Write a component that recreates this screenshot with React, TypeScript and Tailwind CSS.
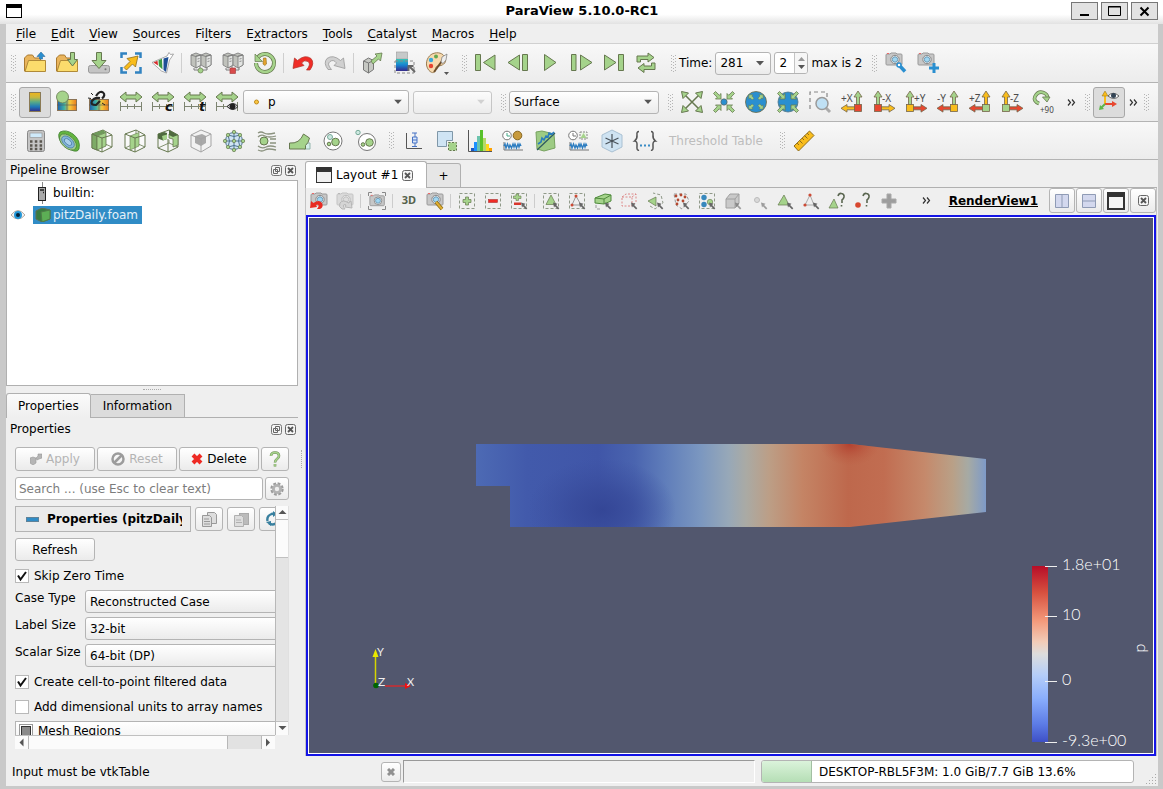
import type { ReactNode } from "react";

const G = "#a5d38b";
const GS = "#66784f";
const Y = "#f9bd1c";
const YS = "#8f6d1c";
const B = "#2a8fd0";
const R = "#e8472f";
const N = "#bdbdbd";
const NS = "#7d7d7d";

const UP = "M17 0l4 6h-2.500v8h-3v-8H13z";

function Axis({ label, left = false, up, side, square }: { label: string; left?: boolean; up: string; side: string; square: string }) {
    return (
        <>
            <g transform={left ? "translate(22 0) scale(-1 1)" : undefined} stroke="#75654a" strokeWidth=".8">
                <path d={UP} fill={up} />
                <path d="M0 17.300l6-3.800v2.300h8v3H6v2.300z" fill={side} />
                <rect x="13.500" y="13.500" width="7" height="7" fill={square} />
            </g>
            <text x={left ? 9 : 0} y="10.500" fontSize="10" fontFamily="Noto Sans, sans-serif" fill="#4c4c4c">{label}</text>
        </>
    );
}

function Cube({ wire = false }: { wire?: boolean }) {
    return (
        <>
            <path d="M1 4L12 0l9 5v12l-10 5-10-4z" fill="#fff" fillOpacity=".6" stroke={GS} />
            <path d="M12 0v13L1 18M12 13l9 4" fill="none" stroke={GS} strokeWidth=".8" />
            {wire ? (
                <path d="M6 6l9-3.500V16l-9 4z" fill={G} stroke={GS} strokeWidth=".6" />
            ) : (
                <>
                    <path d="M1 4l5 2v14l-5-2z" fill="#7dab66" stroke={GS} strokeWidth=".8" />
                    <path d="M6 6l9-3.500V16l-9 4z" fill={G} stroke={GS} strokeWidth=".8" />
                    <path d="M1 4l11-4 3 2.500L6 6z" fill="#6f9a5a" />
                </>
            )}
            <path d="M1 4l10 4 10-3M11 8v14" fill="none" stroke={GS} />
        </>
    );
}

function Servers() {
    return (
        <>
            <path d="M4 16v2h13v-2M10 14v4" fill="none" stroke={NS} />
            {[0, 10].map((x) => (
                <g key={x} transform={`translate(${x} 0)`} stroke="#777" strokeWidth=".8">
                    <path d="M1 3l5-2 5 2v10l-5 3-5-3z" fill="#c0c2bc" />
                    <path d="M6 4l5-1v10l-5 3z" fill="#e2e4e2" />
                    <path d="M1 3l5 1.500L11 3M7.500 7l2-.5M7.500 9.500l2-.5" fill="none" />
                </g>
            ))}
        </>
    );
}

function Heat() {
    return (
        <g>
            <rect x="1.500" y="8.500" width="19" height="11" fill="url(#heat)" stroke="#8b7355" />
            <path d="M1 14h20M11 8v12" stroke="#555" strokeWidth=".6" />
        </g>
    );
}

function Range() {
    return (
        <>
            <path d="M0 6l6-5v3h10V1l6 5-6 5V8H6v3z" fill={G} stroke={GS} />
            <path d="M.5 11v9M7.500 13v5M14.500 13v5M21.500 11v9M0 15.500h22" fill="none" stroke="#7d8471" />
        </>
    );
}

function Camera() {
    return (
        <>
            <path d="M1 3q0-1 1-1h3l1-1h5l1 1h4q1 0 1 1v9q0 1-1 1H2q-1 0-1-1z" fill="#c7c7c7" stroke="#999" />
            <circle cx="10" cy="7.500" r="4.200" fill="#eee" stroke="#888" />
            <circle cx="10" cy="7.500" r="2.700" fill="#9fd6f2" stroke="#6b9ab5" />
            <path d="M2 1.500h2" stroke="#e66" />
        </>
    );
}

function DashBox({ children }: { children?: ReactNode }) {
    return (
        <>
            <rect x="1.500" y="1.500" width="15" height="15" fill="none" stroke="#8f9988" strokeDasharray="3 2" />
            {children}
        </>
    );
}

const pointer = <path d="M11 10.500l4.500 1.200-1.400 1.300 3.200 3.200-1.200 1.200-3.200-3.200-.9 1.400z" fill="#666" />;

function FourArrows({ inward = false }: { inward?: boolean }) {
    return (
        <g fill={G} stroke={GS} strokeWidth=".8">
            {[0, 90, 180, 270].map((a) => (
                <g key={a} transform={`rotate(${a} 11 11)`}>
                    <path d={inward ? "M8 8H2.500l1.700-1.700L.5 2.500l2-2 3.800 3.700L8 2.500z" : "M0 0h6.500L4.700 1.900 8 5.200 5.200 8 1.900 4.700 0 6.500z"} />
                </g>
            ))}
        </g>
    );
}

const icons: Record<string, ReactNode> = {
    Open: (
        <>
            <path d="M.5 19V6l3-3h5l2 3h6v13z" fill="#eab55c" stroke="#a9792f" />
            <path d="M4.500 8.500h17v11H1z" fill="#fbdc6c" stroke="#b08a38" />
            <path d="M17 0l4 4.500h-2.500V7h-3V4.500H13z" fill={B} stroke="#2b6b9b" strokeWidth=".6" />
        </>
    ),
    "Load State": (
        <>
            <path d="M.5 19V6l3-3h5l2 3h6v13z" fill="#eab55c" stroke="#a9792f" />
            <path d="M4.500 8.500h17v11H1z" fill="#fbdc6c" stroke="#b08a38" />
            <path d="M14.500.5h4v7h3l-5 6.500-5-6.500h3z" fill={G} stroke={GS} />
        </>
    ),
    "Save State": (
        <>
            <rect x=".5" y="13.500" width="21" height="7.500" rx="2" fill="#c4c4c4" stroke="#999" />
            <circle cx="17.500" cy="17.300" r="1" fill="#777" />
            <path d="M8.500.5h5v8h4.500l-7 8-7-8h4.500z" fill={G} stroke={GS} />
        </>
    ),
    "Save Extracts": (
        <>
            <path d="M1.500 6V1.500H7M15 1.500h5.500V6M1.500 15v5.500H7M20.500 15v5.500H15" fill="none" stroke="#3183c1" strokeWidth="2.500" />
            <path d="M4 15.500l6-6L7 6.500 18 4l-2.500 11-3-3-6 6z" fill={Y} stroke={YS} strokeWidth=".8" />
        </>
    ),
    "Catalyst Connect": (
        <>
            <path d="M0 10.500L15 4l2-3.500 1.500 2 3-.5-2.500 4-1.500 2-3 13-5-2z" fill="#fff" stroke="#888" strokeWidth=".7" />
            <path d="M1.500 10.500l4-1.700 .5 4.700z" fill="#d52b2b" />
            <path d="M6.500 8.300l3.500-1.500.5 10.700-3.700-3.500z" fill="#3c9a44" />
            <path d="M11.500 6.500l5-1.500-2.500 15-2.500-2z" fill="#1e4f95" />
        </>
    ),
    Connect: (
        <>
            <Servers />
            <circle cx="10.500" cy="18.500" r="2.500" fill={G} stroke={GS} strokeWidth=".7" />
        </>
    ),
    Disconnect: (
        <>
            <Servers />
            <rect x="8" y="16" width="5.500" height="5.500" fill="#d94b4b" stroke="#a44" strokeWidth=".7" />
        </>
    ),
    "Reset Session": (
        <>
            <path d="M3.500 6a9 9 0 1 1-1.500 5" fill="none" stroke={GS} strokeWidth="4" />
            <path d="M3.500 6a9 9 0 1 1-1.500 5" fill="none" stroke={G} strokeWidth="2.600" />
            <path d="M1 2v7.500h7.500z" fill={G} stroke={GS} strokeWidth=".7" />
            <path d="M9.500 6h2.500l.5 6-1.700 1.500L9 12z" fill="#e5a32e" stroke={YS} strokeWidth=".6" />
        </>
    ),
    Undo: <path d="M1 16.500L2.500 6l3 2.500Q13 2 19 6.500q4 4.500-1 11.500h-3.500q5-6 1.500-8.500-3.500-2-6.500 1.500l2.500 2.500z" fill="#f02c26" stroke="#b03028" strokeWidth=".7" />,
    Redo: <path d="M21 16.500L19.500 6l-3 2.500Q9 2 3 6.500 -1 11 4 17.500h3.500Q2.500 12 6 9.500 9.500 7 12.500 11L10 13.500z" fill="#d0d0d0" stroke="#999" strokeWidth=".8" />,
    "Auto Apply": (
        <>
            <path d="M1.500 9l5-3 5 2.500v9l-5 3.500-5-3z" fill="#c6c8c3" stroke="#777" />
            <path d="M1.500 9l5 2 5-2.500M6.500 11v10" fill="none" stroke="#777" />
            <path d="M9 9l6-5-2-2 7-1-1.500 8-2-2-5.500 5z" fill={G} stroke={GS} strokeWidth=".8" />
        </>
    ),
    "Find Data": (
        <>
            <rect x="2.500" y="0" width="11" height="7" fill="#c6c9c9" stroke="#999" strokeWidth=".6" />
            <rect x="2" y="7" width="12" height="12" fill="url(#sky)" />
            <rect x="1" y="9" width="19" height="12" fill="none" stroke="#888" strokeDasharray="3 2" />
            <path d="M21 20l-5-5M14.500 19v-5h5" fill="none" stroke="#666" strokeWidth="2" />
        </>
    ),
    "Edit Color Palette": (
        <>
            <path d="M9 1C3 2 0 8 .5 13c1 6 6 9 8 7s0-5 3-6c5 0 9-3 8-7-1-5-6-7-10.500-6z" fill="#f6d9ae" stroke="#9a7c51" />
            <circle cx="10" cy="4.500" r="2" fill="#63a84f" />
            <circle cx="5" cy="8" r="2.200" fill="#36a9dd" />
            <circle cx="5" cy="14" r="2.200" fill="#e64331" />
            <path d="M8 20l8-11" stroke="#6c4d2b" strokeWidth="2" />
            <path d="M15 10l1-5 5-3-1 6-3 3.500z" fill="#eee" stroke="#777" strokeWidth=".7" />
            <path d="M18 20h5l-2.500 3z" fill="#555" />
        </>
    ),
    "First Frame": <path d="M.5 2.500h5v16h-5zM20 3v15L8.500 10.500z" fill={G} stroke={GS} />,
    "Previous Frame": <path d="M15.500 2.500h5v16h-5zM12.500 3v15L1 10.500z" fill={G} stroke={GS} />,
    Play: <path d="M5.500 2.500v16l11.500-8z" fill={G} stroke={GS} />,
    "Next Frame": <path d="M.5 2.500h4.500v16H.5zM9.500 3v15L21 10.500z" fill={G} stroke={GS} />,
    "Last Frame": <path d="M15.500 2.500h5v16h-5zM1.500 3v15L13 10.500z" fill={G} stroke={GS} />,
    Loop: (
        <path d="M2 10V4h11V1l6 4.500-6 4.500V7.500H5.500V10zM20 11v6.500H9v3L3 16l6-4.500V14h7.500v-3z" fill={G} stroke={GS} />
    ),
    "Adjust Camera": (
        <>
            <Camera />
            <path d="M13.500 12.500l6.500 7" stroke={B} strokeWidth="3.500" />
            <circle cx="14" cy="13" r="2" fill="#fff" stroke={B} strokeWidth="1.500" />
        </>
    ),
    "Add Camera Link": (
        <>
            <Camera />
            <path d="M15.500 11h3v3.500H22v3h-3.500V21h-3v-3.500H12v-3h3.500z" fill={B} />
        </>
    ),
    "Scalar Bar": <rect x="5.500" y="1.500" width="11" height="19" fill="url(#bar)" stroke="#8a7a55" />,
    "Edit Color Map": (
        <>
            <Heat />
            <circle cx="6.500" cy="6" r="6" fill={G} stroke={GS} strokeWidth=".8" />
        </>
    ),
    "Separate Color Map": (
        <>
            <Heat />
            <path d="M8 5q4-6 7-3.500t-1 6M12 7q-6-1-8 3t4 4l4-4" fill="none" stroke="#222" strokeWidth="2.200" />
            <path d="M0 7l3 .5M3 2l2 2M14 12l3 2" stroke="#222" />
        </>
    ),
    "Rescale to Data": <Range />,
    "Rescale to Custom": (
        <>
            <Range />
            <text x="13" y="20" fontSize="13" fontWeight="bold" fontStyle="italic" fontFamily="DejaVu Sans, sans-serif" fill="#111">c</text>
        </>
    ),
    "Rescale over Time": (
        <>
            <Range />
            <text x="15" y="20" fontSize="13" fontWeight="bold" fontStyle="italic" fontFamily="DejaVu Sans, sans-serif" fill="#111">t</text>
        </>
    ),
    "Rescale to Visible": (
        <>
            <Range />
            <path d="M11 15.500q6-6 11 0-5 6-11 0z" fill="#ddd" stroke="#222" />
            <circle cx="16.500" cy="15.500" r="3" fill="#222" />
        </>
    ),
    "Reset Camera": (
        <>
            <path d="M4 4l14 14M18 4L4 18" stroke={GS} strokeWidth="1.500" />
            <path d="M.5.5l7 1.500L2 7.500zM21.500.5l-1.500 7L14.500 2zM.5 21.500l1.500-7L7.500 20zM21.500 21.500l-7-1.500 5.500-5.500z" fill={G} stroke={GS} />
        </>
    ),
    "Zoom to Data": (
        <>
            <FourArrows inward />
            <circle cx="11" cy="11" r="3.200" fill={B} stroke="#6a5a3a" strokeWidth=".6" />
        </>
    ),
    "Reset Camera Closest": (
        <>
            <circle cx="11" cy="11" r="10.500" fill={B} stroke="#6b6a45" strokeWidth=".8" />
            <g transform="translate(3.800 3.800) scale(.65)"><FourArrows /></g>
        </>
    ),
    "Zoom Closest": (
        <>
            <circle cx="11" cy="11" r="10" fill={B} stroke="#4a7187" strokeWidth=".8" />
            <FourArrows inward />
        </>
    ),
    "Zoom to Box": (
        <>
            <path d="M1 18V1h17v6" fill="none" stroke="#888" strokeWidth="1.200" strokeDasharray="4 3" />
            <path d="M17 17l4 4" stroke="#aaa" strokeWidth="3" />
            <circle cx="13" cy="12.500" r="6" fill="#bfe0f4" stroke="#9a9a9a" strokeWidth="1.500" />
        </>
    ),
    "+X": <Axis label="+X" up={G} side={Y} square={R} />,
    "-X": <Axis label="-X" left up={G} side={Y} square={R} />,
    "+Y": <Axis label="+Y" left up={G} side={R} square={Y} />,
    "-Y": <Axis label="-Y" up={G} side={R} square={Y} />,
    "+Z": <Axis label="+Z" up={Y} side={R} square={G} />,
    "-Z": <Axis label="-Z" left up={Y} side={R} square={G} />,
    "Rotate 90": (
        <>
            <path d="M6 12.500Q0 10 2 5.500 5 0 10 1.500q4.500 1.500 4.500 5" fill="none" stroke={GS} strokeWidth="3.600" />
            <path d="M6 12.500Q0 10 2 5.500 5 0 10 1.500q4.500 1.500 4.500 5" fill="none" stroke={G} strokeWidth="2.200" />
            <path d="M9.500 6h7.500l-3 5z" fill={G} stroke={GS} strokeWidth=".8" />
            <text x="7" y="21.500" fontSize="8" fontFamily="Noto Sans, sans-serif" fill="#444">+90</text>
        </>
    ),
    "Orientation Axes": (
        <>
            <path d="M7 14V3" stroke={Y} strokeWidth="2" /><path d="M4 5l3-5 3 5z" fill={Y} stroke={YS} strokeWidth=".5" />
            <path d="M7 13h8" stroke={R} strokeWidth="2" /><path d="M14 10l5 3-5 3z" fill={R} />
            <path d="M7 13l-4 4" stroke="#5db54c" strokeWidth="2" /><path d="M1 19l1-5 4 4z" fill="#5db54c" />
            <path d="M10 5q5-5.500 11 0-5 5-11 0z" fill="#fff" stroke="#444" strokeWidth=".8" />
            <circle cx="15.500" cy="4.500" r="2.500" fill="#345" />
        </>
    ),
    Calculator: (
        <>
            <rect x="2.500" y=".5" width="17" height="21" rx="2" fill="#c5c5c5" stroke="#888" />
            <rect x="5" y="3" width="12" height="4.500" fill="#cfeafa" stroke="#999" strokeWidth=".7" />
            <path d="M5 11.500h13M5 15.500h13M5 19h13" stroke="#59564f" strokeWidth="2.400" strokeDasharray="2.500 2.300" />
        </>
    ),
    Contour: (
        <>
            <path d="M2 2Q8-1 15 4q8 6 6 15-1 3-5 2Q4 18 1 8 0 4 2 2z" fill="#63b53f" stroke="#3f7d30" strokeWidth=".8" />
            <g transform="rotate(42 10 12)">
                <ellipse cx="10" cy="12" rx="10" ry="6" fill="#a9d18f" stroke="#4b7a3a" strokeWidth=".7" />
                <ellipse cx="10" cy="12" rx="7.500" ry="4.500" fill="#86b6dc" stroke="#4c7fa5" strokeWidth=".8" />
                <ellipse cx="10" cy="12" rx="4.500" ry="2.500" fill="#a9cfea" stroke="#4c7fa5" strokeWidth=".8" />
            </g>
        </>
    ),
    Clip: <Cube />,
    Slice: <Cube wire />,
    Threshold: (
        <>
            <path d="M1 4L12 0l9 5v12l-10 5-10-4z" fill="#f5f5f5" stroke={GS} />
            <path d="M12 13L1 18M12 13l9 4M12 13v-3" stroke={GS} strokeWidth=".8" />
            <path d="M1 4l6-2 3 1v6l-4 1.500-5-2z" fill="#4f6b3f" />
            <path d="M5 6l5-1.500V9l-4 1.500z" fill={G} />
            <path d="M12 4l9 1v10l-5 2V9l-4-1z" fill={G} stroke={GS} strokeWidth=".8" />
            <path d="M12 0l9 5-5 2-4-2z" fill="#4f6b3f" />
            <path d="M11 9v13" stroke={GS} />
        </>
    ),
    "Extract Subset": (
        <>
            <path d="M1 5l10-5 10 4v12l-10 6-10-5z" fill="#f2f2f2" stroke="#a4a4a4" />
            <path d="M5 6l7-2 4 2v7l-5 3-6-3z" fill="#a9a9a9" />
            <path d="M1 5l10 4 10-5M11 9v13" fill="none" stroke="#a4a4a4" />
        </>
    ),
    Glyph: (
        <>
            <circle cx="11" cy="11" r="8.500" fill="#cfe4f4" stroke="#4d7390" />
            <path d="M11 1v20M1 11h20M5 5q6 3 12 0M5 17q6-3 12 0M5 5q3 6 0 12M17 5q-3 6 0 12" fill="none" stroke="#4d7390" />
            <g fill={G} stroke={GS} strokeWidth=".7">
                {[[11, 2], [2, 11], [20, 11], [11, 20], [5, 5], [17, 5], [5, 17], [17, 17], [11, 11]].map(([x, y]) => (
                    <circle key={`${x}-${y}`} cx={x} cy={y} r="1.700" />
                ))}
            </g>
        </>
    ),
    "Stream Tracer": (
        <>
            <path d="M2 3q3-2 6 0t11 0M2 7q3-3 7-1t11 0M2 16q4 3 8 1t10 0M2 20q4 2 7 0t11 0M14 9h6M14 13h6" fill="none" stroke="#8b927f" strokeWidth="1.300" />
            <circle cx="8" cy="11" r="4" fill={G} stroke={GS} />
        </>
    ),
    "Warp By Vector": (
        <>
            <path d="M15 13h6v6h-6z" fill="#d5efea" stroke="#93b5ad" />
            <path d="M.5 19v-6q10 1 14-9l6 4q-1 5-4 7.500V19z" fill={G} stroke={GS} />
        </>
    ),
    "Group Datasets": (
        <>
            <circle cx="11" cy="11" r="9" fill="#fff" stroke="#777" />
            <circle cx="8" cy="7" r="2.500" fill="#cde8e0" stroke="#7a9" />
            <circle cx="13.500" cy="12" r="3.800" fill={G} stroke={GS} />
            <circle cx="7" cy="14" r="1.800" fill={G} stroke={GS} />
        </>
    ),
    "Extract Group": (
        <>
            <circle cx="12" cy="12" r="8.500" fill="#fff" stroke="#777" />
            <circle cx="3" cy="2.500" r="2.200" fill="#cde8e0" stroke="#7a9" />
            <circle cx="14.500" cy="12.500" r="3.800" fill={G} stroke={GS} />
            <circle cx="8" cy="14.500" r="1.800" fill={G} stroke={GS} />
        </>
    ),
    "Box Chart": (
        <>
            <path d="M3.500 3v15.500H19" fill="none" stroke="#555" />
            <path d="M12 3v14M9 3h5M9 16.500h5" stroke="#4773c4" />
            <path d="M9.500 7h4.500v6H9.500zM9 10h5" fill="#dce8fa" stroke="#4773c4" />
        </>
    ),
    "Extract Selection": (
        <>
            <path d="M1.500 1.500h15v9h-6v6h-9z" fill="#cfe4f4" stroke="#7f97a8" />
            <rect x="12.500" y="12.500" width="8" height="8" fill={G} stroke={GS} strokeDasharray="2 1.500" />
        </>
    ),
    Histogram: (
        <>
            <path d="M2 18h3v3H2z" fill="#1c57c0" /><path d="M5 12h3v9H5z" fill="#1c90ff" />
            <path d="M8 6h3v15H8z" fill="#6cc4ae" /><path d="M11 0h3v21h-3z" fill="#58c12a" />
            <path d="M14 8h3v13h-3z" fill="#b5d96a" /><path d="M17 14h3v7h-3z" fill="#ffd91a" />
            <path d="M20 18h3v3h-3z" fill="#ffa200" />
            <path d="M-.5 0v21.500h23.500" fill="none" stroke="#555" />
        </>
    ),
    "Plot Global Variables": (
        <>
            <circle cx="5" cy="5.500" r="4.300" fill="#fff" stroke="#777" />
            <path d="M5 3v3h3" fill="none" stroke="#4a8" />
            <circle cx="15.500" cy="5.500" r="4.300" fill="#c79a3d" stroke="#86661f" />
            <path d="M2 12v8h19" fill="none" stroke="#777" />
            <path d="M2 16l1-2 1 4 1.500-4 1.500 4 1-3 1.500 3 1.500-4 1 3 1-3 1.500 4 1.500-4 1 3 1-3 1 2" fill="none" stroke="#2d7dc0" strokeWidth="1.400" />
        </>
    ),
    "Plot Over Line": (
        <>
            <path d="M1 2l6-1 12 3 1 14-11 3L2 19z" fill="#9dcb84" stroke="#77a25f" />
            <path d="M2 20L20 3" stroke="#2e5960" strokeWidth="1.200" />
            <path d="M3 14l3-2 1-4 2 2 2-4 2 1 1-4 3 1 2-2" fill="none" stroke="#2a7dbd" strokeWidth="1.600" />
        </>
    ),
    "Plot Selection Over Time": (
        <>
            <circle cx="5" cy="5.500" r="4.300" fill="#fff" stroke="#777" />
            <path d="M5 3v3h3" fill="none" stroke="#777" />
            <rect x="12" y="2" width="7" height="7" fill="#edf4e8" stroke="#888" strokeDasharray="2 1" />
            <path d="M15.500 3l3 5h-6z" fill={G} />
            <path d="M2 12v8h19" fill="none" stroke="#777" />
            <path d="M2 16l1-2 1 4 1.500-4 1.500 4 1-3 1.500 3 1.500-4 1 3 1-3 1.500 4 1.500-4 1 3 1-3 1 2" fill="none" stroke="#2d7dc0" strokeWidth="1.400" />
        </>
    ),
    "Probe Location": (
        <>
            <path d="M1 5l10-5 10 5v12l-10 5-10-5z" fill="#cfe3f2" stroke="#a9c0d2" />
            <path d="M11 4v14M4.500 8l13 6M17.500 8l-13 6" stroke="#49525a" strokeWidth="1.200" />
        </>
    ),
    "Programmable Filter": (
        <>
            <path d="M5 1.500Q2.500 1.500 3 5t-2.500 6Q3.500 11 3 16t2 4M17 1.500q2.500 0 2 3.500t2.500 6q-3 0-2.500 5t-2 4" fill="none" stroke="#555" strokeWidth="1.500" />
            <path d="M6 15.500h11" stroke="#3a8cc5" strokeWidth="2" strokeDasharray="2 2" />
        </>
    ),
    Ruler: (
        <>
            <path d="M1 16L16.500 1l4.500 4.500L5.500 21z" fill={Y} stroke={YS} />
            <path d="M4 13l2 2M6.500 10.500l3 3M9 8l2 2M11.500 5.500l3 3M14 3l2 2" stroke={YS} />
        </>
    ),
};

const viewIcons: Record<string, ReactNode> = {
    "Camera Undo": <><Camera /><path d="M0 16l1-7 2.500 2Q9 7 12 11q2 4-2 6H7q3-4 .5-4.500L6 13l1 2z" fill="#e82b22" /></>,
    "Camera Redo": <g opacity=".5"><g className="grayscale"><Camera /></g><path d="M16 16l-1-7-2.500 2Q7 7 4 11q-2 4 2 6h3q-3-4-.5-4.500L10 13l-1 2z" fill={N} stroke={NS} /></g>,
    "Capture Screenshot": (
        <>
            <g transform="translate(1 2) scale(.9)"><Camera /></g>
            <path d="M.5 4V.5H4M14 .5h3.500V4M.5 14v3.500H4M17.500 14v3.500H14" fill="none" stroke="#888" />
        </>
    ),
    "Adjust View Camera": <><Camera /><path d="M10 10l6 7" stroke="#8a6a18" strokeWidth="3.500" /><path d="M10 10l6 7" stroke="#e0ae2f" strokeWidth="2" /></>,
    "Add Selection": <DashBox><path d="M7.500 5h3v2.500H13v3h-2.500V13h-3v-2.500H5v-3h2.500z" fill={G} stroke={GS} strokeWidth=".7" /></DashBox>,
    "Subtract Selection": <DashBox><rect x="4.500" y="7.500" width="9" height="3" fill="#f02c26" stroke="#a33" strokeWidth=".6" /></DashBox>,
    "Toggle Selection": <DashBox><path d="M6 2h2.500v2H11v2.500H8.500v2H6v-2H3.500V4H6z" fill={G} stroke={GS} strokeWidth=".6" /><path d="M4 10.500h7v2.500H4z" fill="#d8362c" />{pointer}</DashBox>,
    "Select Cells": <DashBox><path d="M9 3l5 9.500H4z" fill={G} stroke={GS} strokeWidth=".7" />{pointer}</DashBox>,
    "Select Points": <DashBox><path d="M8 4l-4 9h9z" fill="none" stroke="#999" /><circle cx="8" cy="4" r="1.500" fill="#cc4b35" /><circle cx="4" cy="13" r="1.500" fill="#cc4b35" />{pointer}</DashBox>,
    "Frustum Cells": <><path d="M1 6l10-4 6 1v6l-7 3-9-1z" fill={G} stroke="#4f8a3c" /><path d="M1 6l9 1 7-4M10 7v5" fill="none" stroke="#4f8a3c" /><path d="M2 13v4h6" fill="none" stroke="#999" strokeDasharray="3 2" />{pointer}</>,
    "Frustum Points": <><path d="M2 5h10v9H2zM2 5l4-3h10v8l-4 4M12 5l4-3" fill="none" stroke="#d88" strokeDasharray="2 1.500" />{pointer}</>,
    "Polygon Cells": <><path d="M2 9l8-4v9z" fill={G} stroke={GS} strokeWidth=".7" /><path d="M4 14l5 3 8-6-2-8-8-2" fill="none" stroke="#8f9988" strokeDasharray="3 2" />{pointer}</>,
    "Polygon Points": <><path d="M2 2h12l3 7-7 8-6-4z" fill="none" stroke="#999" strokeDasharray="3 2" />{[[4, 4], [9, 3], [13, 5], [6, 8], [11, 9], [5, 12]].map(([x, y]) => <circle key={`${x}-${y}`} cx={x} cy={y} r="1.400" fill="#b5482f" />)}{pointer}</>,
    "Select Blocks": <DashBox><circle cx="6" cy="5.500" r="2.700" fill="#3788bd" /><circle cx="6" cy="12.500" r="2.700" fill="#3788bd" /><circle cx="12" cy="10" r="2.700" fill={G} stroke={GS} strokeWidth=".6" />{pointer}</DashBox>,
    "Frustum Blocks": <><path d="M2 7l4-5h9v9l-4 5H2z" fill="#c9c9c9" stroke="#a0a0a0" /><path d="M2 7h9l4-5M11 7v9" fill="none" stroke="#a0a0a0" /><g opacity=".6">{pointer}</g></>,
    "Hover Points": <g opacity=".6"><circle cx="7" cy="8" r="2.500" fill="#ccc" stroke="#999" />{pointer}</g>,
    "Interactive Cells": <><path d="M8 3l5 10H2z" fill={G} stroke={GS} strokeWidth=".7" />{pointer}</>,
    "Interactive Points": <><path d="M8 3l-5 10h9z" fill="none" stroke="#aaa" /><circle cx="8" cy="3" r="1.600" fill="#cc4b35" /><circle cx="3" cy="13" r="1.600" fill="#cc4b35" />{pointer}</>,
    "Hover Cells Query": <><path d="M6 7l4 9H1z" fill={G} stroke={GS} strokeWidth=".7" /><path d="M10 4q1-3 3.500-2.500 3 .5 2.500 3.500-.5 2-2 3v3M13.500 13v1.500" fill="none" stroke="#5a6650" strokeWidth="1.600" /></>,
    "Hover Points Query": <><circle cx="4" cy="13" r="2.800" fill="#d8472f" /><path d="M9 4q1-3 3.500-2.500 3 .5 2.500 3.500-.5 2-2 3v3M12.500 13v1.500" fill="none" stroke="#5a6650" strokeWidth="1.600" /></>,
    "Grow Selection": <path d="M7 2h4v5h5v4h-5v5H7v-5H2V7h5z" fill="#9d9d9d" stroke="#a9a9a9" />,
};

const fileTools = ["Open", "Load State", "Save State", "Save Extracts", "Catalyst Connect", "|", "Connect", "Disconnect", "Reset Session", "|", "Undo", "Redo", "|", "Auto Apply", "Find Data", "Edit Color Palette"];
const vcrTools = ["First Frame", "Previous Frame", "Play", "Next Frame", "Last Frame", "Loop"];
const colorTools = ["Edit Color Map", "Separate Color Map", "Rescale to Data", "Rescale to Custom", "Rescale over Time", "Rescale to Visible"];
const cameraTools = ["Reset Camera", "Zoom to Data", "Reset Camera Closest", "Zoom Closest", "Zoom to Box", "+X", "-X", "+Y", "-Y", "+Z", "-Z", "Rotate 90"];
const filterTools = ["Calculator", "Contour", "Clip", "Slice", "Threshold", "Extract Subset", "Glyph", "Stream Tracer", "Warp By Vector", "Group Datasets", "Extract Group"];
const dataTools = ["Box Chart", "Extract Selection", "Histogram", "Plot Global Variables", "Plot Over Line", "Plot Selection Over Time", "Probe Location", "Programmable Filter"];
const viewTools = [
    "Camera Undo", "Camera Redo", "|", "Capture Screenshot", "|", "3D", "Adjust View Camera", "|", "Add Selection", "Subtract Selection", "Toggle Selection", "|",
    "Select Cells", "Select Points", "Frustum Cells", "Frustum Points", "Polygon Cells", "Polygon Points", "Select Blocks", "Frustum Blocks", "Hover Points",
    "Interactive Cells", "Interactive Points", "Hover Cells Query", "Hover Points Query", "Grow Selection",
];

const menus = [
    ["", "F", "ile"], ["", "E", "dit"], ["", "V", "iew"], ["", "S", "ources"], ["Fi", "l", "ters"], ["E", "x", "tractors"],
    ["", "T", "ools"], ["", "C", "atalyst"], ["", "M", "acros"], ["", "H", "elp"],
];

const raised = "rounded-[3px] border border-[#b4b4b4] bg-linear-to-b from-white to-[#ebebeb]";

function Grip() {
    return (
        <svg className="mx-[3px] shrink-0" width="5" height="17" aria-hidden="true">
            <path d="M.5 0v17M2.500 1v16M4.500 0v17" stroke="#b5b5b5" strokeDasharray="1 2" />
        </svg>
    );
}

function Chevrons() {
    return (
        <svg width="9" height="7" aria-hidden="true">
            <path d="M1 .5l2.500 3L1 6.500M5 .5l2.500 3L5 6.500" fill="none" stroke="#333" strokeWidth="1.200" />
        </svg>
    );
}

function Tools({ names, wide = false }: { names: string[]; wide?: boolean }) {
    return (
        <>
            {names.map((name, i) =>
                name === "|" ? (
                    <div key={i} className="mx-0.5 h-5 w-0.5 shrink-0 border-l border-[#cfcfcf]" />
                ) : (
                    <button key={name} aria-label={name} className={wide ? "flex h-8 w-[33px] shrink-0 items-center justify-center" : "flex h-8 w-8 shrink-0 items-center justify-center"}>
                        <svg width="22" height="22" viewBox="0 0 22 22" className="overflow-visible">{icons[name]}</svg>
                    </button>
                )
            )}
        </>
    );
}

function Toolbar({ children }: { children: ReactNode }) {
    return (
        <div className="flex h-[39px] shrink-0 items-center overflow-hidden border-b border-[#b3b3b3] bg-linear-to-b from-[#f8f8f8] to-[#ececec] pl-0.5 last:h-[38px]">
            {children}
        </div>
    );
}

function Select({ label, options, className, disabled = false, dot = false }: { label: string; options: string[]; className: string; disabled?: boolean; dot?: boolean }) {
    return (
        <div className={`relative shrink-0 ${className}`}>
            <select aria-label={label} disabled={disabled} className={`h-full w-full appearance-none pr-5 ${dot ? "pl-6" : "pl-1"} ${raised}`}>
                {options.map((o) => <option key={o}>{o}</option>)}
            </select>
            {dot && <span className="absolute top-1/2 left-[11px] size-[5px] -translate-y-1/2 rounded-full border border-[#c08a1c] bg-[#fbc843]" />}
            <svg className="pointer-events-none absolute top-1/2 right-[7px] -translate-y-1/2" width="8" height="5" aria-hidden="true">
                <path d="M0 0h8L4 4.500z" fill={disabled ? "#c4c4c4" : "#555"} />
            </svg>
        </div>
    );
}

function CloseBox() {
    return (
        <svg width="11" height="11" viewBox="0 0 11 11">
            <rect x=".5" y=".5" width="10" height="10" rx="2" fill="#f4f4f4" stroke="#666" />
            <path d="M3 3l5 5M8 3L3 8" stroke="#555" strokeWidth="1.800" />
        </svg>
    );
}

function DockHeader({ title }: { title: string }) {
    return (
        <div className="flex items-center gap-[3px] pr-0.5 pl-1">
            <h2 className="flex-1">{title}</h2>
            <button aria-label={`Float ${title}`}>
                <svg width="11" height="11" viewBox="0 0 11 11">
                    <rect x=".5" y=".5" width="10" height="10" rx="2" fill="#f4f4f4" stroke="#777" />
                    <path d="M4.500 2.500h4v4h-4zM2.500 4.500h4v4h-4z" fill="#f4f4f4" stroke="#666" />
                </svg>
            </button>
            <button aria-label={`Close ${title}`}><CloseBox /></button>
        </div>
    );
}

function Check({ label, checked = false }: { label: string; checked?: boolean }) {
    return (
        <label className="flex h-[21px] shrink-0 items-center gap-[5px]">
            <span className="relative size-3.5">
                <input type="checkbox" defaultChecked={checked} className="peer block size-3.5 appearance-none border border-[#b9b9b9] bg-white" />
                <svg className="pointer-events-none absolute inset-0 hidden peer-checked:block" width="14" height="14" aria-hidden="true">
                    <path d="M3 6.500l2.500 4L11 3" fill="none" stroke="#111" strokeWidth="2" />
                </svg>
            </span>
            {label}
        </label>
    );
}

function Field({ label, value }: { label: string; value: string }) {
    return (
        <label className="flex h-[23px] w-[300px] shrink-0">
            <span className="w-[70px] shrink-0">{label}</span>
            <select className={`h-full flex-1 appearance-none pl-1 ${raised}`}>
                <option>{value}</option>
            </select>
        </label>
    );
}

function PipelineBrowser() {
    return (
        <section>
            <div className="h-5 pt-0.5"><DockHeader title="Pipeline Browser" /></div>
            <ul className="h-[206px] border border-[#b0b0b0] bg-white pt-px">
                <li className="flex h-[22px] items-center pl-[29px]">
                    <svg width="12" height="22" viewBox="0 0 12 22" aria-hidden="true">
                        <path d="M6.500 0v5M6.500 19v3" stroke="#888" />
                        <rect x="2.500" y="5.500" width="7" height="13" fill="#aaa" stroke="#222" />
                        <path d="M4 8h4M7 10.500h1" stroke="#222" strokeWidth="1.500" />
                    </svg>
                    <span className="ml-[5px]">builtin:</span>
                </li>
                <li className="flex h-[22px] items-center pl-1">
                    <svg width="14" height="12" viewBox="0 0 14 12" aria-hidden="true">
                        <path d="M0 6q7-9 14 0-7 8-14 0z" fill="#f4f4f4" stroke="#b5a9a0" />
                        <circle cx="7" cy="6" r="4" fill="#2496d6" />
                        <circle cx="7" cy="6" r="2" fill="#052238" />
                    </svg>
                    <span className="ml-2 flex h-[18px] items-center bg-[#308cc6] pr-1 text-[#e6f1f8]">
                        <svg className="mx-0.5" width="16" height="14" viewBox="0 0 16 14" aria-hidden="true">
                            <path d="M1 3l6-3 8 2v9l-8 3-6-3z" fill="#3a7c3f" stroke="#5d6f52" />
                            <path d="M6 4l9-2v9l-8 3z" fill="#5cae55" stroke="#4e7d47" />
                        </svg>
                        pitzDaily.foam
                    </span>
                </li>
            </ul>
        </section>
    );
}

function PropertiesDock() {
    return (
        <section className="flex min-h-0 flex-1 flex-col">
            <div className="flex h-[25px] items-end" role="tablist">
                <button role="tab" aria-selected="true" className="h-[25px] rounded-t-[3px] border border-b-0 border-[#b0b0b0] bg-linear-to-b from-[#fbfbfb] to-[#efefef] px-[11px]">Properties</button>
                <button role="tab" aria-selected="false" className="h-6 border border-l-0 border-[#b0b0b0] bg-[#dcdcdc] px-3">Information</button>
                <div className="flex-1 self-stretch border-b border-[#b0b0b0]" />
            </div>
            <div className="h-[29px] pt-[3px]"><DockHeader title="Properties" /></div>
            <div className="flex min-h-0 flex-1 flex-col px-[9px] pb-2">
                <div className="flex h-6 gap-0.5">
                    <button disabled className={`flex flex-1 items-center justify-center gap-1 text-[#b4b4b4] ${raised}`}>
                        <svg width="12" height="12" viewBox="0 0 12 12"><path d="M0 5l3-1 3 1v5l-3 2-3-2zM6 5l2-2V1h4v4l-3 1-2 1z" fill="#b5b5b5" stroke="#999" strokeWidth=".6" /></svg>
                        Apply
                    </button>
                    <button disabled className={`flex flex-1 items-center justify-center gap-1 text-[#b4b4b4] ${raised}`}>
                        <svg width="14" height="14" viewBox="0 0 14 14"><circle cx="7" cy="7" r="5.500" fill="none" stroke="#9c9c9c" strokeWidth="2.500" /><path d="M3 11l8-8" stroke="#9c9c9c" strokeWidth="2.500" /></svg>
                        Reset
                    </button>
                    <button className={`flex flex-1 items-center justify-center gap-1 ${raised}`}>
                        <svg width="12" height="12" viewBox="0 0 12 12"><path d="M2 2l8 8M10 2l-8 8" stroke="#ee2a24" strokeWidth="4" /></svg>
                        Delete
                    </button>
                    <button aria-label="Help" className={`flex w-7 items-center justify-center ${raised}`}>
                        <svg width="12" height="16" viewBox="0 0 12 16">
                            <path d="M2 5q0-3.500 4-3.500T10 5q0 1.500-2 3T6 11.500M6 13v2.500" fill="none" stroke="#6f8a58" strokeWidth="2.600" />
                            <path d="M2 5q0-3.500 4-3.500T10 5q0 1.500-2 3T6 11.500M6 13v2.500" fill="none" stroke={G} strokeWidth="1.600" />
                        </svg>
                    </button>
                </div>
                <div className="mt-1.5 flex h-[23px] gap-0.5">
                    <input aria-label="Search properties" placeholder="Search ... (use Esc to clear text)" className="min-w-0 flex-1 rounded-[3px] border border-[#b4b4b4] bg-white px-[3px] placeholder:text-[#7c7c7c]" />
                    <button aria-label="Advanced properties" className={`flex w-6 items-center justify-center ${raised}`}>
                        <svg width="14" height="14" viewBox="0 0 14 14">
                            <circle cx="7" cy="7" r="5.200" fill="none" stroke="#9b9b9b" strokeWidth="3" strokeDasharray="2.600 1.480" />
                            <circle cx="7" cy="7" r="3.600" fill="#eee" stroke="#b2b2b2" strokeWidth="2.800" />
                        </svg>
                    </button>
                </div>
                <div className="mt-1.5 flex min-h-0 flex-1">
                    <div className="flex min-w-0 flex-1 flex-col">
                        <div className="flex min-h-0 flex-1 flex-col gap-1 overflow-hidden">
                            <div className="mb-0.5 flex h-[26px] shrink-0 items-center gap-1">
                                <button className="flex h-full w-44 shrink-0 items-center gap-2 border border-[#b4b4b4] bg-[#ebebeb] pr-2 pl-2.5 font-bold">
                                    <span className="h-[5px] w-[13px] shrink-0 border border-[#5f8298] bg-[#308cc6]" />
                                    <span className="overflow-hidden whitespace-nowrap">Properties (pitzDaily.foam)</span>
                                </button>
                                <button aria-label="Copy properties" className={`flex h-6 w-7 shrink-0 items-center justify-center ${raised}`}>
                                    <svg width="15" height="15" viewBox="0 0 15 15"><path d="M5.500.5h7l2 2v9h-9z" fill="#ddd" stroke="#999" /><path d="M.5 3.500h7l2 2v9h-9zM2 7h5M2 9.500h6M2 12h6" fill="#ddd" stroke="#999" /></svg>
                                </button>
                                <button aria-label="Paste properties" disabled className={`flex h-6 w-7 shrink-0 items-center justify-center ${raised}`}>
                                    <svg width="15" height="15" viewBox="0 0 15 15"><rect x="5.500" y="1.500" width="9" height="11" fill="#bbb" stroke="#aaa" /><path d="M.5 3.500h7l2 2v9h-9zM2 8h5M2 10.500h6" fill="#ddd" stroke="#b0b0b0" /></svg>
                                </button>
                                <button aria-label="Restore defaults" className={`flex h-6 w-7 shrink-0 items-center justify-center ${raised}`}>
                                    <svg width="16" height="16" viewBox="0 0 16 16"><path d="M2.500 10q-1-5 4-7l3-.500M4 12.500q6 3 9-3" fill="none" stroke="#39809f" strokeWidth="2.400" /><path d="M8 0l4 3-4 3zM1 11l5-1v5z" fill="#39809f" /></svg>
                                </button>
                            </div>
                            <button className={`h-[23px] w-20 shrink-0 ${raised}`}>Refresh</button>
                            <Check label="Skip Zero Time" checked />
                            <Field label="Case Type" value="Reconstructed Case" />
                            <Field label="Label Size" value="32-bit" />
                            <Field label="Scalar Size" value="64-bit (DP)" />
                            <Check label="Create cell-to-point filtered data" checked />
                            <Check label="Add dimensional units to array names" />
                            <div className="flex h-5 w-[300px] shrink-0 items-center gap-[5px] border border-[#b4b4b4] bg-linear-to-b from-white to-[#f2f2f2] pl-[3px]">
                                <span className="flex size-3.5 items-center justify-center border border-[#999] bg-white">
                                    <span className="size-2.5 border border-[#333] bg-[#8a8a8a]" />
                                </span>
                                Mesh Regions
                            </div>
                        </div>
                        <div className="flex h-3.5 shrink-0 items-center border-t border-[#c0c0c0] bg-[#fbfbfb]">
                            <svg width="13" height="13" aria-hidden="true"><path d="M8.500 2.500v8L4.500 6.500z" fill="#555" /></svg>
                            <div className="h-full flex-1 border-l border-[#b8b8b8]" />
                            <div className="h-full w-[35px] border-x border-[#b8b8b8] bg-[#e2e2e2]" />
                            <svg width="13" height="13" aria-hidden="true"><path d="M4 2.500v8l4-4z" fill="#555" /></svg>
                        </div>
                    </div>
                    <div className="mb-3.5 flex w-3.5 shrink-0 flex-col items-center border-x border-l-[#b8b8b8] border-r-[#e0e0e0] bg-[#fbfbfb]">
                        <svg className="shrink-0" width="13" height="13" aria-hidden="true"><path d="M2.500 8h8l-4-4z" fill="#555" /></svg>
                        <div className="h-[39px] w-full shrink-0 border-y border-[#c0c0c0]" />
                        <div className="w-full flex-1 border-b border-[#c0c0c0] bg-[#e4e4e4]" />
                        <svg className="shrink-0" width="13" height="13" aria-hidden="true"><path d="M2.500 4h8l-4 4z" fill="#555" /></svg>
                    </div>
                </div>
            </div>
        </section>
    );
}

function PitzDaily() {
    return (
        <svg width="510" height="83" viewBox="0 0 510 83" role="img" aria-label="pitzDaily pressure field">
            <defs>
                <linearGradient id="field">
                    <stop offset="0" stopColor="#4d6ab4" />
                    <stop offset=".1" stopColor="#425aab" />
                    <stop offset=".24" stopColor="#4056a8" />
                    <stop offset=".31" stopColor="#4a64af" />
                    <stop offset=".37" stopColor="#5f7dba" />
                    <stop offset=".44" stopColor="#7b97c0" />
                    <stop offset=".495" stopColor="#97a8b8" />
                    <stop offset=".53" stopColor="#aaaaa4" />
                    <stop offset=".575" stopColor="#bc9e86" />
                    <stop offset=".64" stopColor="#c48465" />
                    <stop offset=".73" stopColor="#be684c" />
                    <stop offset=".8" stopColor="#c16d51" />
                    <stop offset=".88" stopColor="#c5896b" />
                    <stop offset=".935" stopColor="#b9a087" />
                    <stop offset=".965" stopColor="#a6aaa4" />
                    <stop offset="1" stopColor="#7e9ac8" />
                </linearGradient>
                <radialGradient id="low">
                    <stop offset="0" stopColor="#344696" />
                    <stop offset=".4" stopColor="#374a9a" stopOpacity=".75" />
                    <stop offset="1" stopColor="#3a4e9f" stopOpacity="0" />
                </radialGradient>
                <radialGradient id="high">
                    <stop offset="0" stopColor="#b2402f" />
                    <stop offset="1" stopColor="#bb5c42" stopOpacity="0" />
                </radialGradient>
                <clipPath id="mesh"><path d="M0 0h374l136 15v53L374 83H34V42H0z" /></clipPath>
            </defs>
            <g clipPath="url(#mesh)">
                <rect width="510" height="83" fill="url(#field)" />
                <ellipse cx="126" cy="66" rx="74" ry="52" fill="url(#low)" />
                <ellipse cx="374" cy="0" rx="30" ry="22" fill="url(#high)" />
            </g>
        </svg>
    );
}

function ColorLegend() {
    const ticks = [["1.8e+01", "top-0"], ["10", "top-[50px]"], ["0", "top-[115px]"], ["-9.3e+00", "top-[176px]"]];
    return (
        <div className="absolute right-0.5 bottom-3 h-[176px] w-[120px] font-[Lato,sans-serif] text-base leading-none font-light text-white">
            <div className="h-full w-4 bg-[linear-gradient(#b70d28,#d6503f_15%,#f3997a_31%,#f2cbb7_43%,#dddddd_50%,#b5cdf8_62%,#8baffd_75%,#5c7be5_90%,#3e50c6)]" />
            {ticks.map(([text, top]) => (
                <div key={text} className={`absolute left-[13px] flex h-0 items-center gap-[5px] ${top}`}>
                    <span className="h-px w-3 bg-[#eee]" />
                    <span className="-mt-1">{text}</span>
                </div>
            ))}
            <span className="absolute top-[74px] right-2 -rotate-90">p</span>
        </div>
    );
}

function RenderView() {
    return (
        <div className="relative flex min-h-0 flex-1 items-center justify-center border-2 border-[#1414e6] bg-[#52576e] outline-1 -outline-offset-3 outline-white">
            <PitzDaily />
            <svg className="absolute bottom-[62px] left-[61px] overflow-visible font-[Lato,sans-serif]" width="46" height="44" aria-label="Orientation axes">
                <path d="M6.500 36V8" stroke="#d5d500" strokeWidth="1.500" />
                <path d="M6.500 1l3 8h-6z" fill="#e8e800" />
                <path d="M16 38h22" stroke="#f02020" strokeWidth="1.200" />
                <path d="M36 35l6 3-6 3z" fill="#f01010" />
                <circle cx="7" cy="37.500" r="2.800" fill="#006400" />
                <text x="8" y="8" fontSize="11" fill="#eee">Y</text>
                <text x="9" y="38" fontSize="12" fill="#eee">Z</text>
                <text x="38" y="38" fontSize="11" fill="#eee">X</text>
            </svg>
            <ColorLegend />
        </div>
    );
}

function ViewArea() {
    return (
        <section className="flex min-w-0 flex-1 flex-col pb-px">
            <div className="flex h-7 shrink-0 items-end">
                <div className="flex h-[27px] w-[122px] items-center rounded-t-[3px] border border-b-0 border-[#b0b0b0] bg-white pl-2.5">
                    <svg width="16" height="16" viewBox="0 0 16 16" aria-hidden="true"><rect x=".5" y=".5" width="15" height="15" fill="#f0f0f0" stroke="#333" /><path d="M0 0h16v5H0z" fill="#333" /></svg>
                    <button className="ml-1">Layout #1</button>
                    <button aria-label="Close layout" className="ml-1"><CloseBox /></button>
                </div>
                <button aria-label="New layout" className="h-[25px] w-[34px] rounded-tr-[3px] border border-l-0 border-[#b0b0b0] bg-[#e6e6e6]">+</button>
                <div className="flex-1 self-stretch border-b border-[#b0b0b0]" />
            </div>
            <div className="flex h-[27px] shrink-0 items-center overflow-hidden border-x border-[#c4c4c4] pb-0.5">
                {viewTools.map((name, i) =>
                    name === "|" ? (
                        <div key={i} className="mx-0.5 h-3.5 w-0.5 shrink-0 border-l border-[#ccc]" />
                    ) : name === "3D" ? (
                        <button key={name} className="w-[26px] shrink-0 font-[Noto_Sans,sans-serif] text-[11px] font-bold text-[#56614b]">3D</button>
                    ) : (
                        <button key={name} aria-label={name} className="flex w-[26px] shrink-0 justify-center">
                            <svg width="18" height="18" viewBox="0 0 18 18" className="overflow-visible">{viewIcons[name]}</svg>
                        </button>
                    )
                )}
                <button aria-label="More view tools" className="mr-[18px] ml-auto"><Chevrons /></button>
                <button className="mr-[11px] font-bold underline">RenderView1</button>
                <div className="flex gap-px">
                    <button aria-label="Split horizontally" className={`flex h-[25px] w-[26px] items-center justify-center ${raised}`}>
                        <svg width="14" height="14"><path d="M.5.500h13v13H.5zM7 .500v13" fill="#d3d8ee" stroke="#8f9bb5" /></svg>
                    </button>
                    <button aria-label="Split vertically" className={`flex h-[25px] w-[26px] items-center justify-center ${raised}`}>
                        <svg width="14" height="14"><path d="M.5.500h13v13H.5zM.5 7h13" fill="#d3d8ee" stroke="#8f9bb5" /></svg>
                    </button>
                    <button aria-label="Maximize" className={`flex h-[25px] w-[26px] items-center justify-center ${raised}`}>
                        <svg width="18" height="18"><rect x="1" y="1" width="16" height="16" fill="#f4f4f4" stroke="#333" strokeWidth="2" /><path d="M0 0h18v5H0z" fill="#333" /></svg>
                    </button>
                    <button aria-label="Close view" className={`flex h-[25px] w-[26px] items-center justify-center ${raised}`}><CloseBox /></button>
                </div>
            </div>
            <div className="flex min-h-0 flex-1 flex-col border-x border-[#c4c4c4]"><RenderView /></div>
        </section>
    );
}

export default function App() {
    return (
        <div className="flex h-screen flex-col overflow-hidden bg-[#c9c9c9] font-[DejaVu_Sans,sans-serif] text-xs text-black">
            <svg width="0" height="0" className="absolute" aria-hidden="true">
                <defs>
                    <linearGradient id="bar" x2="0" y2="1">
                        <stop offset="0" stopColor="#f0b41c" /><stop offset=".25" stopColor="#c9b83e" />
                        <stop offset=".5" stopColor="#58ab86" /><stop offset=".75" stopColor="#1f78b8" /><stop offset="1" stopColor="#352a87" />
                    </linearGradient>
                    <linearGradient id="heat">
                        <stop offset="0" stopColor="#1e5fae" /><stop offset=".35" stopColor="#3fb0a4" />
                        <stop offset=".65" stopColor="#f5c83c" /><stop offset="1" stopColor="#e87b1c" />
                    </linearGradient>
                    <linearGradient id="sky" x2="0" y2="1">
                        <stop offset="0" stopColor="#37c4b4" /><stop offset=".5" stopColor="#1784d1" /><stop offset="1" stopColor="#35298a" />
                    </linearGradient>
                </defs>
            </svg>

            <header className="flex h-6 shrink-0 items-center justify-between bg-linear-to-b from-white from-60% to-[#e2e2e2] pr-[5px] pl-1.5 pb-0.5">
                <div className="w-[87px]">
                    <svg width="16" height="14" aria-hidden="true"><rect x=".5" y=".5" width="15" height="13" fill="#fff" stroke="#000" /><path d="M0 0h16v4H0z" /></svg>
                </div>
                <h1 className="text-[13px] leading-5 font-bold">ParaView 5.10.0-RC1</h1>
                <div className="flex gap-[3px]">
                    <button aria-label="Minimize window" className="h-[18px] w-[27px] border border-[#777] bg-[#e2e2e2]"><svg width="25" height="16"><path d="M8 12h9" stroke="#000" strokeWidth="2" /></svg></button>
                    <button aria-label="Maximize window" className="h-[18px] w-[27px] border border-[#777] bg-[#e2e2e2]"><svg width="25" height="16"><path d="M6.500 3.500h12v9h-12zM6 4h13" fill="none" stroke="#000" /></svg></button>
                    <button aria-label="Close window" className="h-[18px] w-[27px] border border-[#777] bg-[#e2e2e2]"><svg width="25" height="16"><path d="M8.500 4.500l8 8M16.500 4.500l-8 8" stroke="#000" strokeWidth="2" /></svg></button>
                </div>
            </header>

            <div className="mr-[5px] mb-[3px] ml-1.5 flex min-h-0 flex-1 flex-col bg-[#efefef]">
                <nav className="flex h-5 shrink-0 items-center gap-px border-b border-[#d0d0d0] pl-[3px]">
                    {menus.map(([before, key, after]) => (
                        <button key={before + key + after} className="px-[7px]">{before}<u className="underline-offset-2">{key}</u>{after}</button>
                    ))}
                </nav>

                <div className="shrink-0">
                    <Toolbar>
                        <Grip />
                        <Tools names={fileTools} />
                        <div className="w-1.5 shrink-0" />
                        <Grip />
                        <Tools names={vcrTools} />
                        <div className="w-1.5 shrink-0" />
                        <Grip />
                        <label htmlFor="time" className="mr-[3px]">Time:</label>
                        <div className="relative">
                            <select id="time" className={`h-[23px] w-14 appearance-none pl-1 ${raised}`}><option>281</option></select>
                            <svg className="pointer-events-none absolute top-[9px] right-[7px]" width="8" height="5" aria-hidden="true"><path d="M0 0h8L4 4.500z" fill="#555" /></svg>
                        </div>
                        <div className="mx-[3px] flex h-[22px] w-[34px] overflow-hidden rounded-[3px] border border-[#b4b4b4] bg-white">
                            <input type="number" aria-label="Time step" defaultValue={2} className="w-[19px] appearance-none pl-1 [appearance:textfield] [&::-webkit-inner-spin-button]:hidden" />
                            <div className="flex flex-1 flex-col justify-center gap-1 border-l border-[#c4c4c4] bg-[#f6f6f6]">
                                <button aria-label="Increase" className="flex justify-center"><svg width="7" height="4"><path d="M0 4h7L3.500 0z" fill="#999" /></svg></button>
                                <button aria-label="Decrease" className="flex justify-center"><svg width="7" height="4"><path d="M0 0h7L3.500 4z" fill="#555" /></svg></button>
                            </div>
                        </div>
                        <span className="mr-[7px]">max is 2</span>
                        <Grip />
                        <Tools names={["Adjust Camera", "Add Camera Link"]} />
                    </Toolbar>

                    <Toolbar>
                        <Grip />
                        <button aria-label="Scalar Bar" className="flex h-[31px] w-8 shrink-0 items-center justify-center rounded-[3px] border border-[#a8a8a8] bg-[#dcdcdc]">
                            <svg width="22" height="22" viewBox="0 0 22 22">{icons["Scalar Bar"]}</svg>
                        </button>
                        <Tools names={colorTools} />
                        <Select label="Color by" options={["p"]} className="mr-1 h-6 w-[166px]" dot />
                        <Select label="Component" options={[""]} className="mr-1.5 h-[23px] w-[79px] opacity-70" disabled />
                        <Grip />
                        <Select label="Representation" options={["Surface"]} className="mr-1.5 h-[23px] w-[150px]" />
                        <Grip />
                        <Tools names={cameraTools} />
                        <button aria-label="More camera tools" className="flex w-[22px] shrink-0 justify-center"><Chevrons /></button>
                        <Grip />
                        <button aria-label="Orientation Axes" className="flex h-[31px] w-8 shrink-0 items-center justify-center rounded-[3px] border border-[#a8a8a8] bg-[#dcdcdc]">
                            <svg width="22" height="22" viewBox="0 0 22 22">{icons["Orientation Axes"]}</svg>
                        </button>
                        <button aria-label="More axes tools" className="flex w-4 shrink-0 justify-center"><Chevrons /></button>
                        <Grip />
                    </Toolbar>

                    <Toolbar>
                        <Grip />
                        <Tools names={filterTools} wide />
                        <div className="w-1 shrink-0" />
                        <Grip />
                        <Tools names={dataTools} wide />
                        <button disabled className="mr-3.5 ml-2 text-[#bdbdbd]">Threshold Table</button>
                        <Grip />
                        <Tools names={["Ruler"]} wide />
                    </Toolbar>
                </div>

                <main className="flex min-h-0 flex-1 pr-px">
                    <div className="flex w-[292px] shrink-0 flex-col">
                        <PipelineBrowser />
                        <div className="flex h-[7px] shrink-0 items-center justify-center">
                            <div className="w-[18px] border-t border-dotted border-[#aaa]" />
                        </div>
                        <PropertiesDock />
                    </div>
                    <div className="flex w-[7px] shrink-0 items-center justify-center">
                        <div className="h-[18px] border-l border-dotted border-[#aaa]" />
                    </div>
                    <ViewArea />
                </main>

                <footer className="flex h-[29px] shrink-0 items-center">
                    <div className="flex w-[397px] shrink-0 items-center justify-between pr-0.5 pl-1.5">
                        <span>Input must be vtkTable</span>
                        <button aria-label="Abort" disabled className={`flex h-5 w-5 items-center justify-center ${raised}`}>
                            <svg width="8" height="8"><path d="M1 1l6 6M7 1L1 7" stroke="#909090" strokeWidth="3" /></svg>
                        </button>
                    </div>
                    <div role="progressbar" aria-label="Progress" className="mr-1.5 h-[23px] flex-1 border border-t-[#999] border-r-white border-b-white border-l-[#999]" />
                    <div className="flex h-[23px] w-[373px] shrink-0 items-center overflow-hidden rounded-[3px] border border-[#b4b4b4] bg-white">
                        <div className="mr-[7px] h-full w-[50px] border-r border-[#a3bfa3] bg-linear-to-b from-[#dbf3db] to-[#b5deb5]" />
                        DESKTOP-RBL5F3M: 1.0 GiB/7.7 GiB 13.6%
                    </div>
                    <svg className="mr-0.5 ml-3 self-end" width="10" height="12" aria-hidden="true">
                        <path d="M9.500 0v12M6.500 3v9M3.500 6v6M.5 9v3" stroke="#aaa" strokeDasharray="1 2" />
                    </svg>
                </footer>
            </div>
        </div>
    );
}
